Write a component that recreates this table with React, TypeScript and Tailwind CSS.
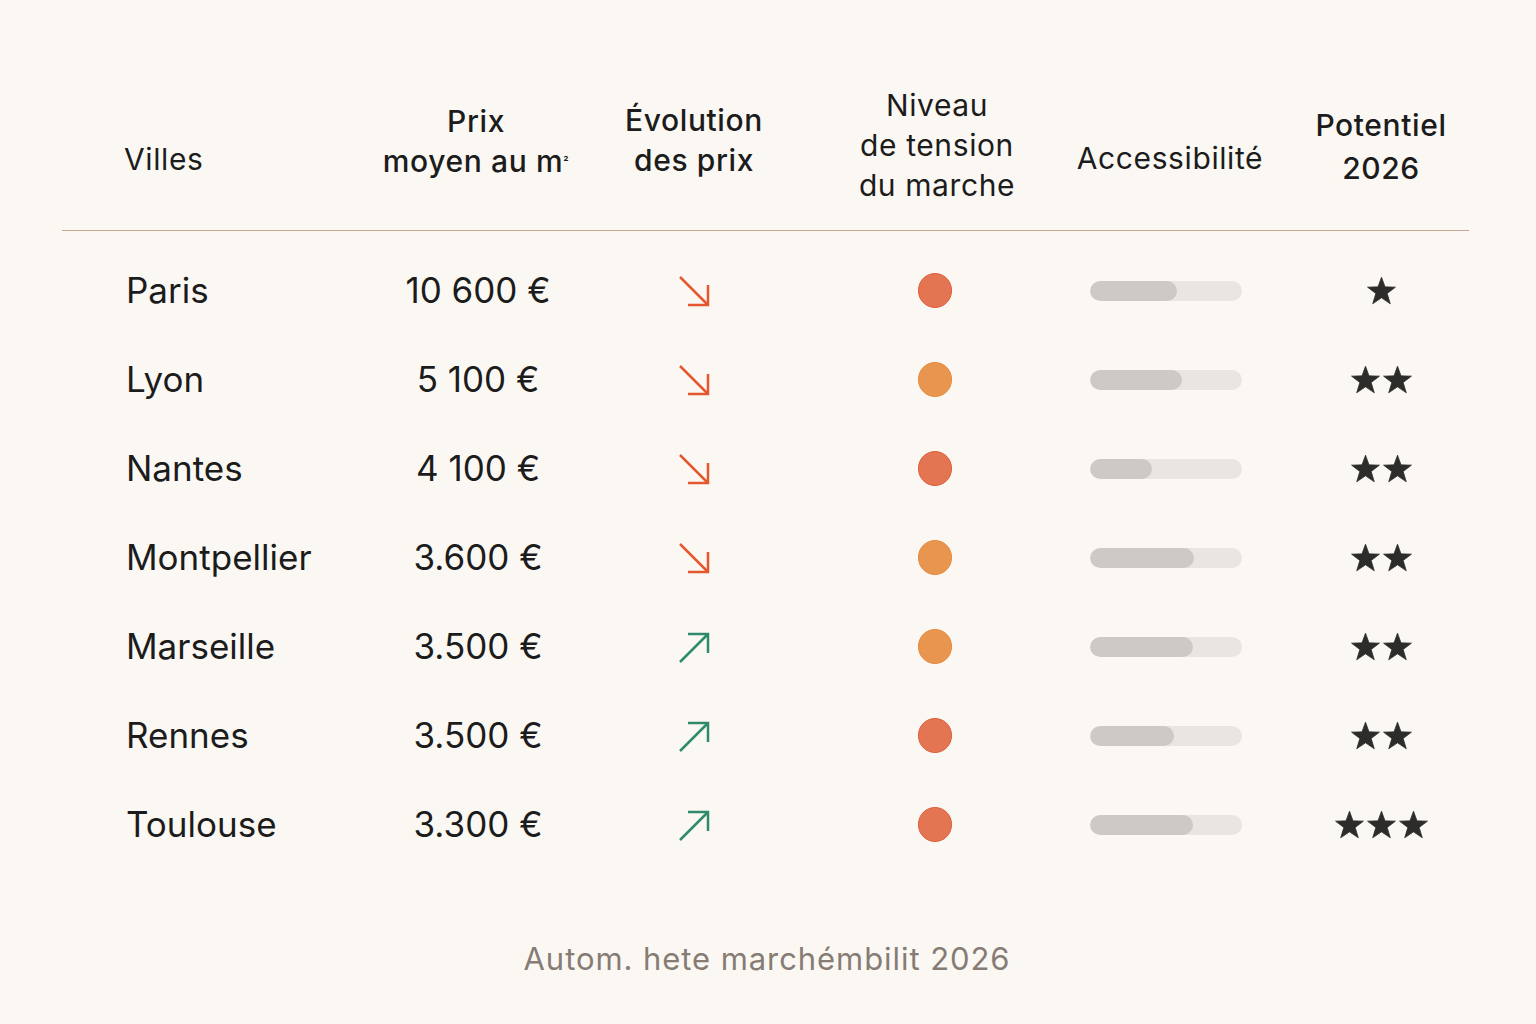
import React from "react";

type Row = { city: string; price: string; up: boolean; dot: "red" | "orange"; fill: number; stars: number };

const rows: Row[] = [
  { city: "Paris", price: "10 600 €", up: false, dot: "red", fill: 87, stars: 1 },
  { city: "Lyon", price: "5 100 €", up: false, dot: "orange", fill: 92, stars: 2 },
  { city: "Nantes", price: "4 100 €", up: false, dot: "red", fill: 62, stars: 2 },
  { city: "Montpellier", price: "3.600 €", up: false, dot: "orange", fill: 104, stars: 2 },
  { city: "Marseille", price: "3.500 €", up: true, dot: "orange", fill: 103, stars: 2 },
  { city: "Rennes", price: "3.500 €", up: true, dot: "red", fill: 84, stars: 2 },
  { city: "Toulouse", price: "3.300 €", up: true, dot: "red", fill: 103, stars: 3 },
];

const COLS = "grid grid-cols-[298px_236px_196px_290px_168px_262px]";

function Arrow({ up }: { up: boolean }) {
  return up ? (
    <svg width="32" height="32" viewBox="0 0 32 32" fill="none" stroke="#2f8a6c" strokeWidth="2.5" strokeLinecap="butt">
      <path d="M2 31 L30 3" />
      <path d="M10 3 H30 V22" />
    </svg>
  ) : (
    <svg width="32" height="32" viewBox="0 0 32 32" fill="none" stroke="#e4582f" strokeWidth="2.5" strokeLinecap="butt">
      <path d="M2 2 L30 30" />
      <path d="M30 10 V30 H10" />
    </svg>
  );
}

function Star() {
  return (
    <svg width="31" height="30" viewBox="0 0 24 23" fill="#2c2c2a" stroke="#2c2c2a" strokeWidth="0.6" strokeLinejoin="round">
      <path d="M12 0.8 L14.7 8.3 L22.8 8.5 L16.4 13.4 L18.8 21.4 L12 16.8 L5.2 21.4 L7.6 13.4 L1.2 8.5 L9.3 8.3 Z" />
    </svg>
  );
}

export default function App() {
  return (
    <div
      className="w-[1536px] h-[1024px] bg-[#fbf8f4] text-[#1c1c1c] overflow-hidden"
      style={{ fontFamily: "Inter, Lato, sans-serif" }}
    >
      <div className="px-[62px] pt-[84px]">
        <div className={COLS + " h-[124px] items-center text-[30px] leading-[40px] tracking-[0.02em]"}>
          <div className="pl-[62px] mt-[26px]">Villes</div>
          <div className="text-center font-medium -mt-[10px] -ml-[4px]">
            Prix
            <br />
            moyen au m<sup className="text-[12px]">²</sup>
          </div>
          <div className="text-center font-medium -mt-[12px]">
            Évolution
            <br />
            des prix
          </div>
          <div className="text-center -mt-[2px]">
            Niveau
            <br />
            de tension
            <br />
            du marche
          </div>
          <div className="flex justify-center mt-[24px] ml-[8px] whitespace-nowrap">Accessibilité</div>
          <div className="text-center font-medium leading-[43px] mt-[2px]">
            Potentiel
            <br />
            2026
          </div>
        </div>
        <div className="mt-[22px] h-px bg-[#c9a793] w-[1407px]" />
        <div className="pt-[15px]">
          {rows.map((r) => (
            <div key={r.city} className={COLS + " h-[89px] items-center text-[35px]"}>
              <div className="pl-[64px]">{r.city}</div>
              <div className="text-center">{r.price}</div>
              <div className="flex justify-center">
                <Arrow up={r.up} />
              </div>
              <div className="flex justify-center">
                <div
                  className={
                    "w-[34px] h-[35px] rounded-full border -ml-[4px] " +
                    (r.dot === "red" ? "bg-[#e37552] border-[#e0603c]" : "bg-[#e8964f] border-[#e98a3c]")
                  }
                />
              </div>
              <div className="flex justify-center">
                <div className="w-[152px] h-[20px] rounded-full bg-[#e9e6e2] overflow-hidden">
                  <div className="h-full rounded-full bg-[#cdcac5]" style={{ width: r.fill }} />
                </div>
              </div>
              <div className="flex justify-center gap-[1px]">
                {Array.from({ length: r.stars }).map((_, i) => (
                  <Star key={i} />
                ))}
              </div>
            </div>
          ))}
        </div>
        <div className="mt-[70px] text-center text-[31px] leading-[40px] tracking-[0.03em] text-[#877c74] w-[1410px]">
          Autom. hete marchémbilit 2026
        </div>
      </div>
    </div>
  );
}
